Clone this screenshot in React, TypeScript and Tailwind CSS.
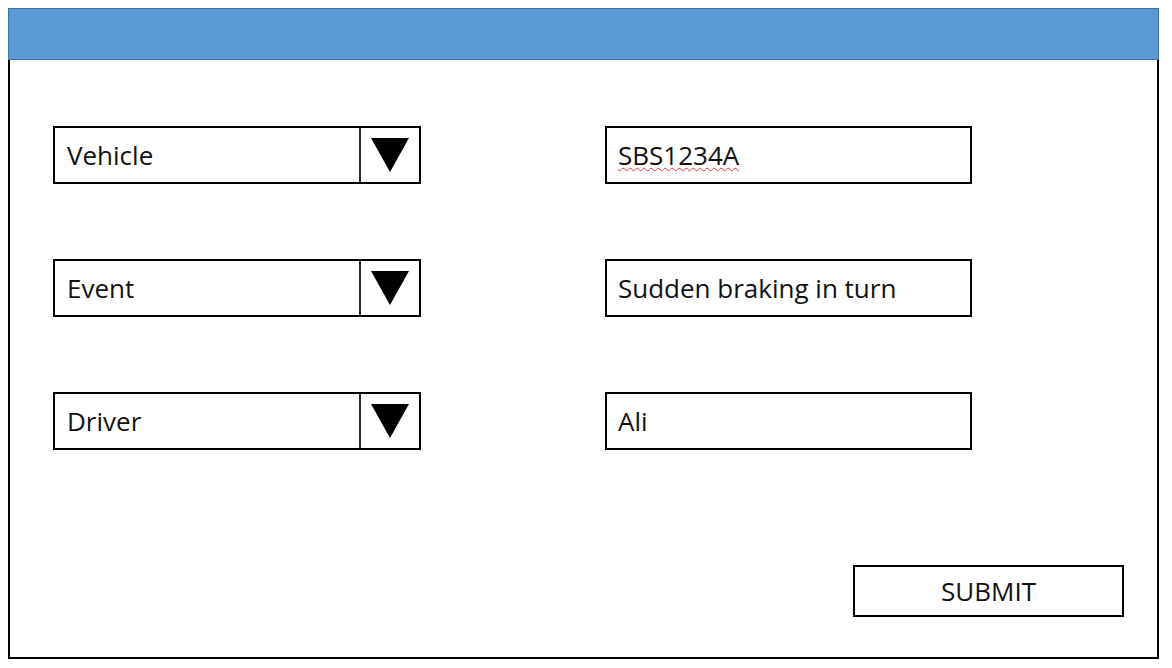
import React from 'react';

const font = { fontFamily: '"Open Sans", "Noto Sans", sans-serif' };

const DropDown: React.FC<{ label: string }> = ({ label }) => (
    <div className="flex h-[58px] w-[368px] border-2 border-black bg-white">
        <div className="flex flex-1 items-center pl-[12px] text-[26px] text-[#111]">{label}</div>
        <div className="flex w-[60px] items-center justify-center border-l-2 border-[#2a2a2a]">
            <svg width="40" height="36" viewBox="0 0 40 36">
                <polygon points="1,1 39,1 20,35" fill="#000" />
            </svg>
        </div>
    </div>
);

const TextBox: React.FC<{ value: string; spell?: boolean }> = ({ value, spell }) => (
    <div className="flex h-[58px] w-[367px] items-center border-2 border-black bg-white pl-[11px] text-[26px] text-[#111]">
        <span className={spell ? 'underline decoration-wavy decoration-[#e03030] decoration-1 underline-offset-2' : ''}>
            {value}
        </span>
    </div>
);

export default function App() {
    const rows = [
        { label: 'Vehicle', value: 'SBS1234A', spell: true },
        { label: 'Event', value: 'Sudden braking in turn' },
        { label: 'Driver', value: 'Ali' },
    ];

    return (
        <div className="h-[668px] w-[1172px] bg-white pl-[8px] pt-[8px]" style={font}>
            <div className="flex h-[651px] w-[1151px] flex-col border-2 border-t-0 border-black">
                <div className="-mx-[2px] h-[52px] border-[1.5px] border-[#41719c] bg-[#5b9bd5]" />
                <div className="flex flex-1 flex-col pl-[43px] pt-[66px]">
                    <div className="flex flex-col gap-[75px]">
                        {rows.map((r) => (
                            <div key={r.label} className="flex gap-[184px]">
                                <DropDown label={r.label} />
                                <TextBox value={r.value} spell={r.spell} />
                            </div>
                        ))}
                    </div>
                    <div className="flex justify-end pr-[33px] pt-[115px]">
                        <button className="flex h-[52px] w-[271px] items-center justify-center border-2 border-black bg-white text-[26px] text-[#111]">
                            SUBMIT
                        </button>
                    </div>
                </div>
            </div>
        </div>
    );
}
